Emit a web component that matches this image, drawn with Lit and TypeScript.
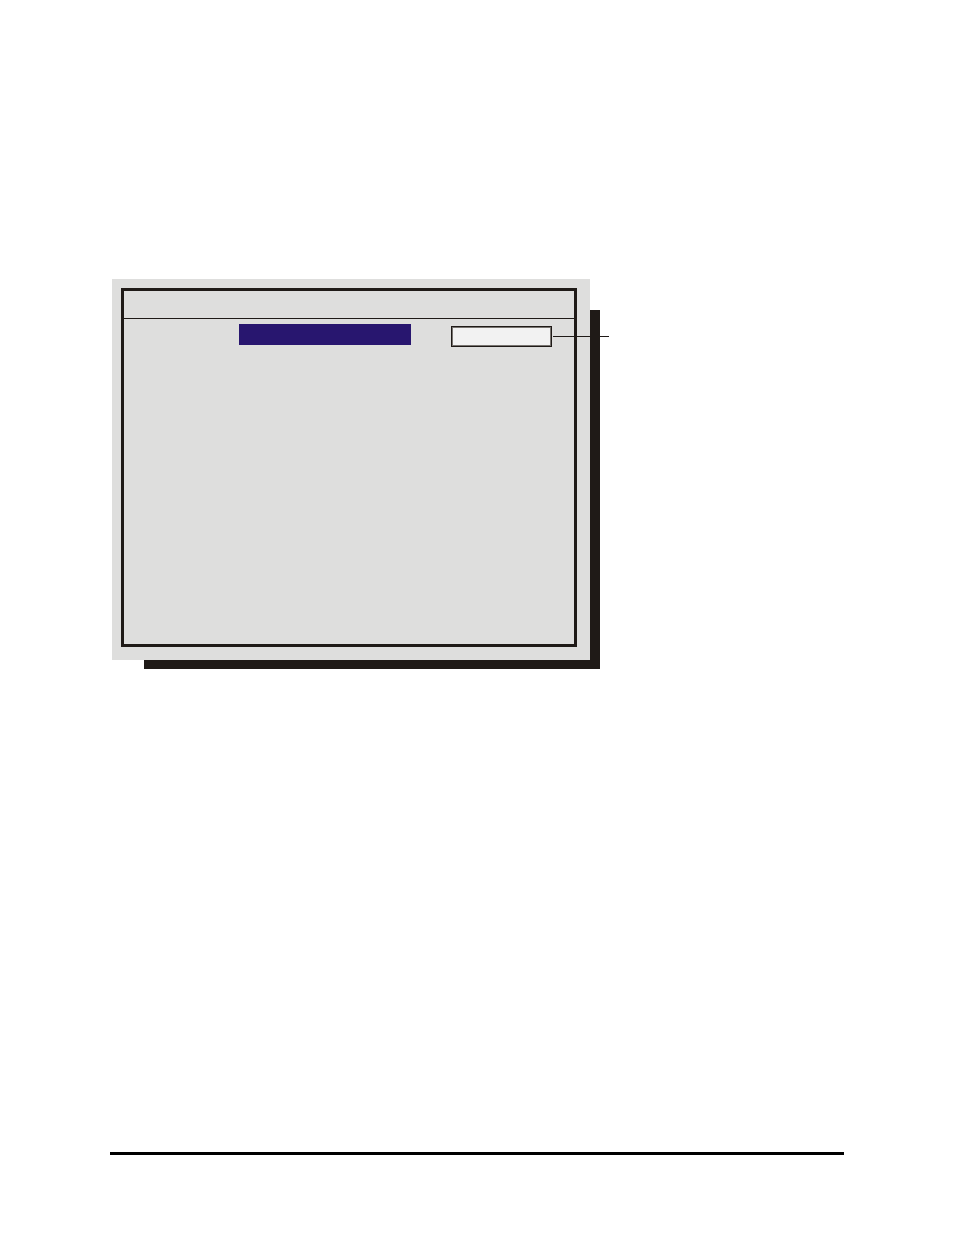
import { LitElement, html, css } from "lit";
import { customElement } from "lit/decorators.js";

@customElement("app-root")
export class AppRoot extends LitElement {
  static styles = css`
    :host {
      display: block;
      background: #ffffff;
      font-family: "Liberation Sans", sans-serif;
    }
    * {
      box-sizing: border-box;
    }
    .page {
      display: flex;
      flex-direction: column;
      justify-content: space-between;
      min-height: 100vh;
      padding: 279px 110px 80px;
    }
    .panel {
      width: 100%;
      max-width: 478px;
      margin: 0 2px;
      padding: 9px 13px 13px 9px;
      background: #dededd;
      box-shadow: 21px 20px 0 -11px #1f1a17;
    }
    .frame {
      min-height: 359px;
      border: 3px solid #1f1a17;
    }
    .header {
      height: 28px;
      border-bottom: 1px solid #1f1a17;
    }
    .row {
      display: flex;
      justify-content: flex-end;
      align-items: flex-start;
      gap: 40px;
      padding: 5px 22px 0 0;
    }
    .selected {
      flex: 0 1 172px;
      height: 21px;
      background: #28166f;
    }
    .field {
      position: relative;
      flex: 0 1 101px;
      min-width: 0;
      height: 21px;
      margin-top: 2px;
    }
    .value {
      display: block;
      width: 100%;
      height: 100%;
      margin: 0;
      padding: 0 4px;
      border: 1px solid #1f1a17;
      border-radius: 0;
      outline: none;
      background: #f2f2f2;
      box-shadow: inset 0 0 0 1px #77736f;
      font: 12px "Liberation Sans", sans-serif;
    }
    /* Callout line running from the field past the panel edge */
    .leader {
      position: absolute;
      top: 10px;
      left: calc(100% + 1px);
      width: 56px;
      height: 1px;
      background: #1f1a17;
    }
    .rule {
      width: 100%;
      height: 3px;
      margin: 0;
      border: 0;
      background: #000000;
    }
  `;

  render() {
    return html`
      <main class="page">
        <section class="panel">
          <div class="frame">
            <div class="header"></div>
            <div class="row">
              <div class="selected"></div>
              <div class="field">
                <input class="value" type="text" aria-label="Value" />
                <span class="leader"></span>
              </div>
            </div>
          </div>
        </section>
        <hr class="rule" />
      </main>
    `;
  }
}
